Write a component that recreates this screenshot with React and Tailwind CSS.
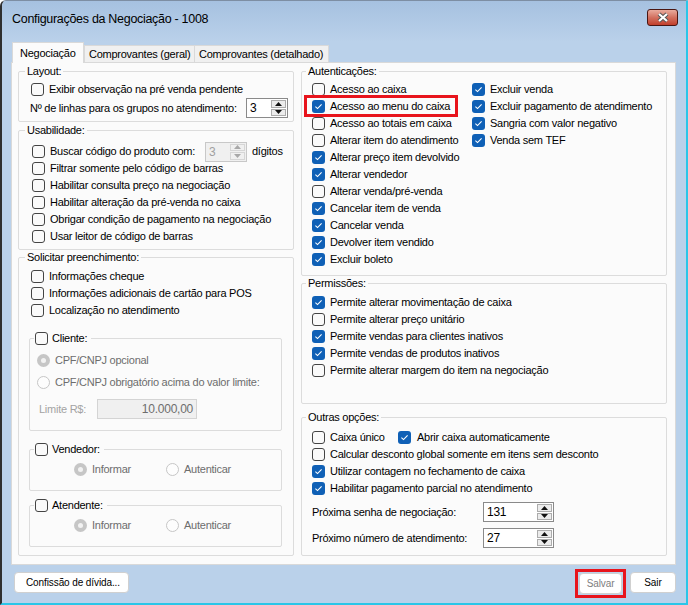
import clsx from 'clsx';

const autenticacoes = [
  { label: 'Acesso ao caixa', on: false },
  { label: 'Acesso ao menu do caixa', on: true, flag: true },
  { label: 'Acesso ao totais em caixa', on: false },
  { label: 'Alterar item do atendimento', on: false },
  { label: 'Alterar preço item devolvido', on: true },
  { label: 'Alterar vendedor', on: true },
  { label: 'Alterar venda/pré-venda', on: false },
  { label: 'Cancelar item de venda', on: true },
  { label: 'Cancelar venda', on: true },
  { label: 'Devolver item vendido', on: true },
  { label: 'Excluir boleto', on: true },
];

const autenticacoesExtra = [
  { label: 'Excluir venda', on: true },
  { label: 'Excluir pagamento de atendimento', on: true },
  { label: 'Sangria com valor negativo', on: true },
  { label: 'Venda sem TEF', on: true },
];

const permissoes = [
  { label: 'Permite alterar movimentação de caixa', on: true },
  { label: 'Permite alterar preço unitário', on: false },
  { label: 'Permite vendas para clientes inativos', on: true },
  { label: 'Permite vendas de produtos inativos', on: true },
  { label: 'Permite alterar margem do item na negociação', on: false },
];

function Box({ on }) {
  if (on) {
    return (
      <span className="flex h-[13px] w-[13px] shrink-0 items-center justify-center rounded-[3px] bg-[#0f60b6]">
        <svg width="9" height="7" viewBox="0 0 9 7">
          <path d="M1.4 3.7 L3.5 5.6 L7.6 1.4" fill="none" stroke="#fff" strokeWidth="1.1" />
        </svg>
      </span>
    );
  }
  return <span className="h-[13px] w-[13px] shrink-0 rounded-[3px] border border-[#444] bg-[#fafafa]" />;
}

function Check({ on, children, className, flag }) {
  return (
    <div className={clsx('relative flex h-[17px] items-center gap-[5px] whitespace-nowrap', className)}>
      <Box on={on} />
      <span>{children}</span>
      {flag && (
        <span className="absolute -left-[8px] -top-[3px] -bottom-[2px] right-[14px] border-[3px] border-[#e8141c]" />
      )}
    </div>
  );
}

function Radio({ on, children, className }) {
  return (
    <div className={clsx('flex h-[17px] items-center gap-[5px] whitespace-nowrap text-[#6d6d6d]', className)}>
      {on ? (
        <span className="flex h-[13px] w-[13px] shrink-0 items-center justify-center rounded-full bg-[#c6c6c6]">
          <span className="h-[5px] w-[5px] rounded-full bg-[#f2f2f2]" />
        </span>
      ) : (
        <span className="h-[13px] w-[13px] shrink-0 rounded-full border border-[#c6c6c6] bg-[#fdfdfd]" />
      )}
      <span>{children}</span>
    </div>
  );
}

function Arrow({ up, color }) {
  return (
    <svg width="7" height="4" viewBox="0 0 7 4">
      <path d={up ? 'M0 4 L3.5 0 L7 4 Z' : 'M0 0 L3.5 4 L7 0 Z'} fill={color} />
    </svg>
  );
}

function SpinBox({ value, className, disabled }) {
  const arrow = disabled ? '#a8a8a8' : '#111';
  return (
    <div
      className={clsx(
        'flex h-[20px] shrink-0 border text-[12px]',
        disabled ? 'border-[#c8c8c8] bg-[#f0f0f0] text-[#a0a0a0]' : 'border-[#8a8a8a] bg-white text-black',
        className
      )}
    >
      <span className="flex-1 pl-[3px] leading-[18px]">{value}</span>
      <div className="my-[1px] mr-[1px] flex w-[15px] flex-col gap-px">
        <span className={clsx('flex flex-1 items-center justify-center border', disabled ? 'border-[#d6d6d6] bg-[#f0f0f0]' : 'border-[#acacac] bg-[#ececec]')}>
          <Arrow up color={arrow} />
        </span>
        <span className={clsx('flex flex-1 items-center justify-center border', disabled ? 'border-[#d6d6d6] bg-[#f0f0f0]' : 'border-[#acacac] bg-[#ececec]')}>
          <Arrow color={arrow} />
        </span>
      </div>
    </div>
  );
}

function Group({ title, className, legend = 'ml-[6px]', children }) {
  return (
    <fieldset className={clsx('min-w-0 shrink-0 rounded-[2px] border border-[#dcdcdc]', className)}>
      <legend className={clsx('px-[2px] leading-[14px]', legend)}>{title}</legend>
      {children}
    </fieldset>
  );
}

function SubGroup({ title, className, children }) {
  return (
    <fieldset className={clsx('ml-[10px] mr-[11px] min-w-0 shrink-0 rounded-[2px] border border-[#dcdcdc]', className)}>
      <legend className="ml-[4px] pl-[1px] pr-[4px] leading-[14px]">
        <span className="inline-flex items-center gap-[4px] align-top">
          <Box on={false} />
          <span>{title}</span>
        </span>
      </legend>
      {children}
    </fieldset>
  );
}

function Button({ children, className }) {
  return (
    <button className={clsx('flex h-[21px] items-center justify-center rounded-[4px] border border-[#d0d0d0] bg-white text-[10px] tracking-[-0.1px]', className)}>
      {children}
    </button>
  );
}

export default function App() {
  return (
    <div className="flex h-[605px] w-[688px] flex-col overflow-hidden rounded-tl-[6px] border-t border-l-2 border-r-2 border-b-2 border-t-[#7d8ea3] border-l-[#2f2f2f] border-r-[#2ac6e8] border-b-[#2ac6e8] bg-[#bad1ea] font-['Liberation_Sans',Arial,sans-serif] text-[11px] tracking-[-0.25px] text-black">
      {/* title bar */}
      <div className="flex h-[41px] shrink-0 items-start bg-linear-to-b from-[#a6c1e0] to-[#bad1ea]">
        <span className="ml-[10px] mt-[10px] text-[12.5px] leading-[16px] tracking-[-0.3px]">
          Configurações da Negociação - 1008
        </span>
        <button className="ml-auto mr-[8px] mt-[8px] flex h-[17px] w-[31px] items-center justify-center rounded-[3px] border border-[#4a1612] bg-linear-to-b from-[#e9ab9e] via-[#d2705f] to-[#c13e2b]">
          <svg width="14" height="11" viewBox="0 0 14 11">
            <path d="M3 2 L11 9 M11 2 L3 9" stroke="#555" strokeWidth="4.2" />
            <path d="M3 2 L11 9 M11 2 L3 9" stroke="#fff" strokeWidth="2.2" />
          </svg>
        </button>
      </div>

      {/* tabs */}
      <div className="flex h-[20px] shrink-0 items-end pl-[10px]">
        <div className="relative z-10 -mb-px flex h-[21px] w-[72px] items-center border border-b-0 border-[#d9d9d9] bg-[#fbfbfb] pl-[7px]">
          Negociação
        </div>
        <div className="flex h-[17px] w-[111px] items-center border border-b-0 border-[#d9d9d9] bg-[#f0f0f0] pl-[4px]">
          Comprovantes (geral)
        </div>
        <div className="flex h-[17px] w-[134px] items-center border border-b-0 border-l-0 border-[#d9d9d9] bg-[#f0f0f0] pl-[4px]">
          Comprovantes (detalhado)
        </div>
      </div>

      {/* tab page */}
      <div className="ml-[9px] flex h-[503px] w-[665px] shrink-0 gap-[7px] border border-[#d9d9d9] bg-[#fbfbfb] pl-[6px] pt-[1px]">
        {/* left column */}
        <div className="flex w-[276px] flex-col">
          <Group title="Layout:" className="h-[58px]">
            <Check on={false} className="ml-[12px] mt-[3px]">Exibir observação na pré venda pendente</Check>
            <div className="flex h-[20px] items-center pl-[11px]">
              <span className="w-[216px]">Nº de linhas para os grupos no atendimento:</span>
              <SpinBox value="3" className="w-[42px]" />
            </div>
          </Group>

          <Group title="Usabilidade:" className="mt-[1px] h-[127px]">
            <div className="mt-[6px] flex flex-col pl-[13px]">
              <div className="flex h-[17px] items-center whitespace-nowrap">
                <Box on={false} />
                <span className="ml-[5px] w-[155px]">Buscar código do produto com:</span>
                <SpinBox value="3" disabled className="h-[19px] w-[42px]" />
                <span className="ml-[5px]">dígitos</span>
              </div>
              <Check on={false}>Filtrar somente pelo código de barras</Check>
              <Check on={false}>Habilitar consulta preço na negociação</Check>
              <Check on={false}>Habilitar alteração da pré-venda no caixa</Check>
              <Check on={false}>Obrigar condição de pagamento na negociação</Check>
              <Check on={false}>Usar leitor de código de barras</Check>
            </div>
          </Group>

          <Group title="Solicitar preenchimento:" className="h-[306px]">
            <div className="mt-[4px] flex flex-col pl-[12px]">
              <Check on={false}>Informações cheque</Check>
              <Check on={false}>Informações adicionais de cartão para POS</Check>
              <Check on={false}>Localização no atendimento</Check>
            </div>

            <SubGroup title="Cliente:" className="mt-[12px] h-[100px]">
              <div className="flex flex-col">
                <Radio on className="mt-[7px] pl-[7px]">CPF/CNPJ opcional</Radio>
                <Radio on={false} className="mt-[5px] pl-[7px]">CPF/CNPJ obrigatório acima do valor limite:</Radio>
                <div className="mt-[8px] flex h-[20px] items-center pl-[9px]">
                  <span className="w-[58px] text-[#a3a3a3]">Limite R$:</span>
                  <span className="flex h-[20px] w-[100px] items-center justify-end border border-[#d4d4d4] bg-[#f0f0f0] pr-[3px] text-[12px] text-[#6d6d6d]">
                    10.000,00
                  </span>
                </div>
              </div>
            </SubGroup>

            <SubGroup title="Vendedor:" className="mt-[11px] h-[49px]">
              <div className="mt-[5px] flex pl-[44px]">
                <Radio on className="w-[92px]">Informar</Radio>
                <Radio on={false}>Autenticar</Radio>
              </div>
            </SubGroup>

            <SubGroup title="Atendente:" className="mt-[7px] h-[49px]">
              <div className="mt-[5px] flex pl-[44px]">
                <Radio on className="w-[92px]">Informar</Radio>
                <Radio on={false}>Autenticar</Radio>
              </div>
            </SubGroup>
          </Group>
        </div>

        {/* right column */}
        <div className="flex w-[366px] flex-col">
          <Group title="Autenticações:" legend="ml-[4px]" className="h-[212px]">
            <div className="mt-[3px] flex pl-[10px]">
              <div className="flex w-[160px] flex-col">
                {autenticacoes.map((a) => (
                  <Check key={a.label} on={a.on} flag={a.flag}>
                    {a.label}
                  </Check>
                ))}
              </div>
              <div className="flex flex-col">
                {autenticacoesExtra.map((a) => (
                  <Check key={a.label} on={a.on}>
                    {a.label}
                  </Check>
                ))}
              </div>
            </div>
          </Group>

          <Group title="Permissões:" legend="ml-[4px]" className="h-[128px]">
            <div className="mt-[4px] flex flex-col pl-[10px]">
              {permissoes.map((p) => (
                <Check key={p.label} on={p.on}>
                  {p.label}
                </Check>
              ))}
            </div>
          </Group>

          <Group title="Outras opções:" legend="ml-[4px]" className="mt-[6px] h-[146px]">
            <div className="mt-[5px] flex flex-col pl-[10px]">
              <div className="flex">
                <Check on={false} className="w-[86px]">Caixa único</Check>
                <Check on className="gap-[6px]">Abrir caixa automaticamente</Check>
              </div>
              <Check on={false}>Calcular desconto global somente em itens sem desconto</Check>
              <Check on>Utilizar contagem no fechamento de caixa</Check>
              <Check on>Habilitar pagamento parcial no atendimento</Check>
              <div className="mt-[5px] flex h-[20px] items-center">
                <span className="w-[171px]">Próxima senha de negociação:</span>
                <SpinBox value="131" className="w-[71px]" />
              </div>
              <div className="mt-[6px] flex h-[20px] items-center">
                <span className="w-[171px]">Próximo número de atendimento:</span>
                <SpinBox value="27" className="w-[71px]" />
              </div>
            </div>
          </Group>
        </div>
      </div>

      {/* dialog buttons */}
      <div className="mt-[7px] flex items-start pl-[12px] pr-[10px]">
        <Button className="w-[115px] justify-start pl-[11px]">Confissão de dívida...</Button>
        <div className="relative ml-auto mt-[1px]">
          <Button className="h-[20px] w-[43px] text-[#7e7e7e]">Salvar</Button>
          <span className="absolute -inset-[4px] border-[3px] border-[#e8141c]" />
        </div>
        <Button className="ml-[8px] w-[46px]">Sair</Button>
      </div>
    </div>
  );
}
